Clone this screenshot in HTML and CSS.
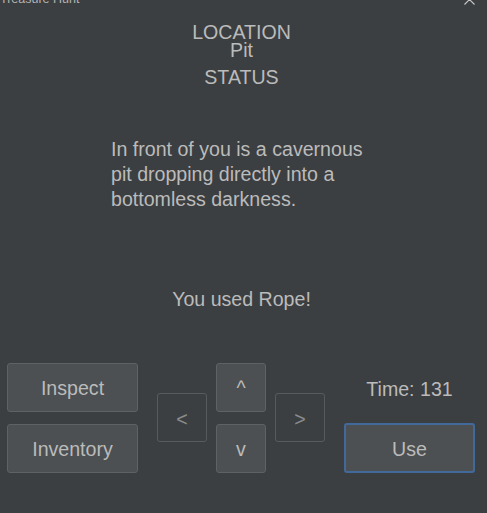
FILE: index.html
```html
<!DOCTYPE html>
<html>
<head>
<meta charset="utf-8">
<link rel="stylesheet" href="styles.css">
</head>
<body>
<div class="titlebar">
  <span class="title">Treasure Hunt</span>
  <svg class="close" width="11" height="11" viewBox="0 0 11 11"><path d="M0.5 0.5 L10.5 10.5 M10.5 0.5 L0.5 10.5" stroke="#c8c8c8" stroke-width="1.1" fill="none"/></svg>
</div>
<div class="header">
  <div class="line">LOCATION</div>
  <div class="line">Pit</div>
  <div class="line status">STATUS</div>
</div>
<div class="desc">In front of you is a cavernous pit dropping directly into a bottomless darkness.</div>
<div class="message">You used Rope!</div>
<div class="controls">
  <div class="col wide">
    <button class="btn">Inspect</button>
    <button class="btn">Inventory</button>
  </div>
  <div class="col small">
    <button class="btn off">&lt;</button>
  </div>
  <div class="col small">
    <button class="btn">^</button>
    <button class="btn">v</button>
  </div>
  <div class="col small">
    <button class="btn off">&gt;</button>
  </div>
  <div class="col wide right">
    <div class="time">Time: 131</div>
    <button class="btn focus">Use</button>
  </div>
</div>
</body>
</html>
```
FILE: styles.css
```css
html, body {
  margin: 0;
  padding: 0;
  background: #3c3f41;
}
body {
  width: 487px;
  height: 513px;
  overflow: hidden;
  font-family: "Liberation Sans", Arial, sans-serif;
  color: #bbbbbb;
  font-size: 19.6px;
}
.titlebar {
  height: 6px;
  overflow: hidden;
  display: flex;
  justify-content: space-between;
  align-items: flex-start;
}
.title {
  font-size: 12.5px;
  line-height: 13px;
  margin-top: -7px;
  color: #b4b4b4;
}
.close {
  margin-top: -6px;
  margin-right: 12px;
}
.header {
  margin-top: 17px;
  text-align: center;
  width: 483px;
}
.line {
  line-height: 18px;
}
.status {
  margin-top: 9px;
}
.desc {
  margin-top: 51px;
  margin-left: 111px;
  width: 268px;
  line-height: 25px;
}
.message {
  margin-top: 75px;
  width: 483px;
  text-align: center;
  line-height: 25px;
}
.controls {
  margin-top: 50px;
  padding-left: 7px;
  display: flex;
  align-items: center;
}
.col {
  display: flex;
  flex-direction: column;
  gap: 12px;
  justify-content: center;
}
.wide {
  width: 131px;
}
.small {
  width: 50px;
}
.col.wide + .col.small {
  margin-left: 19px;
}
.col.small + .col.small {
  margin-left: 9px;
}
.col.small + .col.wide {
  margin-left: 19px;
}
.btn {
  height: 49px;
  width: 100%;
  box-sizing: border-box;
  background: #4c5052;
  border: 1px solid #5e6264;
  border-radius: 3px;
  color: #bbbbbb;
  font-family: "Liberation Sans", Arial, sans-serif;
  font-size: 19.6px;
  padding: 3px 0 0 0;
  margin: 0;
}
.btn.off {
  background: transparent;
  border-color: #585b5d;
  color: #8a8c8e;
}
.btn.focus {
  border: 2px solid #41699b;
  height: 50px;
}
.time {
  height: 49px;
  box-sizing: border-box;
  padding-top: 16px;
  line-height: 22px;
  text-align: center;
}
```
